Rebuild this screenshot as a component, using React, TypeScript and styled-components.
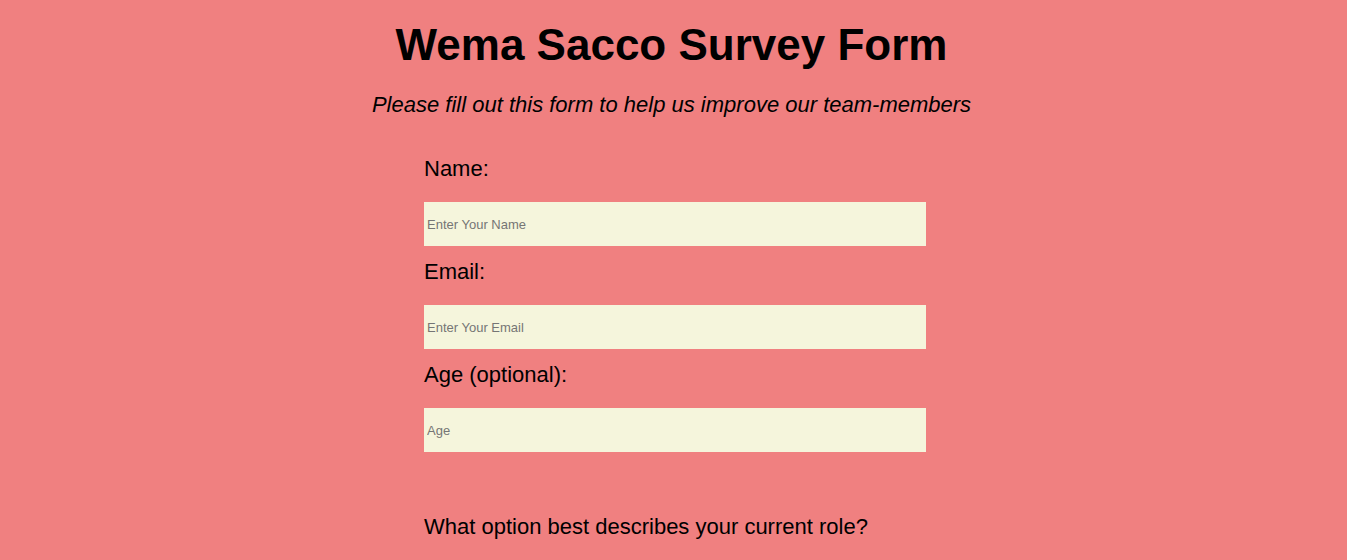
import React from "react";
import styled, { createGlobalStyle } from "styled-components";

const GlobalStyle = createGlobalStyle`
  html, body {
    margin: 0;
    padding: 0;
    background: #f08080;
    font-family: "Liberation Sans", Arial, sans-serif;
    color: #000;
  }
`;

const Page = styled.main`
  display: flex;
  flex-direction: column;
  align-items: center;
  padding: 17px 4px 0 0;
`;

const Title = styled.h1`
  margin: 0;
  font-size: 44px;
  font-weight: 700;
  line-height: 55px;
  text-align: center;
`;

const Subtitle = styled.p`
  margin: 20px 0 0;
  font-size: 22px;
  font-style: italic;
  line-height: 25px;
  text-align: center;
`;

const Form = styled.form`
  width: 502px;
  margin: 39px 0 0 7px;
  display: flex;
  flex-direction: column;
`;

const Label = styled.label`
  display: block;
  font-size: 22px;
  line-height: 25px;
  margin-bottom: 21px;
`;

const Input = styled.input<{ $last?: boolean }>`
  box-sizing: border-box;
  width: 100%;
  height: 44px;
  border: none;
  outline: none;
  background: #f5f5dc;
  padding: 0 3px;
  margin: 0 0 ${(p) => (p.$last ? "62px" : "13px")};
  font-family: "Liberation Sans", Arial, sans-serif;
  font-size: 13px;
  color: #000;
  &::placeholder {
    color: #757575;
  }
`;

const Question = styled.p`
  margin: 0;
  font-size: 22px;
  line-height: 25px;
`;

export default function App() {
  return (
    <>
      <GlobalStyle />
      <Page>
        <Title id="title">Wema Sacco Survey Form</Title>
        <Subtitle id="description">
          Please fill out this form to help us improve our team-members
        </Subtitle>
        <Form id="survey-form" onSubmit={(e) => e.preventDefault()}>
          <Label htmlFor="name">Name:</Label>
          <Input id="name" type="text" placeholder="Enter Your Name" />
          <Label htmlFor="email">Email:</Label>
          <Input id="email" type="email" placeholder="Enter Your Email" />
          <Label htmlFor="number">Age (optional):</Label>
          <Input id="number" type="number" placeholder="Age" $last />
          <Question>What option best describes your current role?</Question>
        </Form>
      </Page>
    </>
  );
}
